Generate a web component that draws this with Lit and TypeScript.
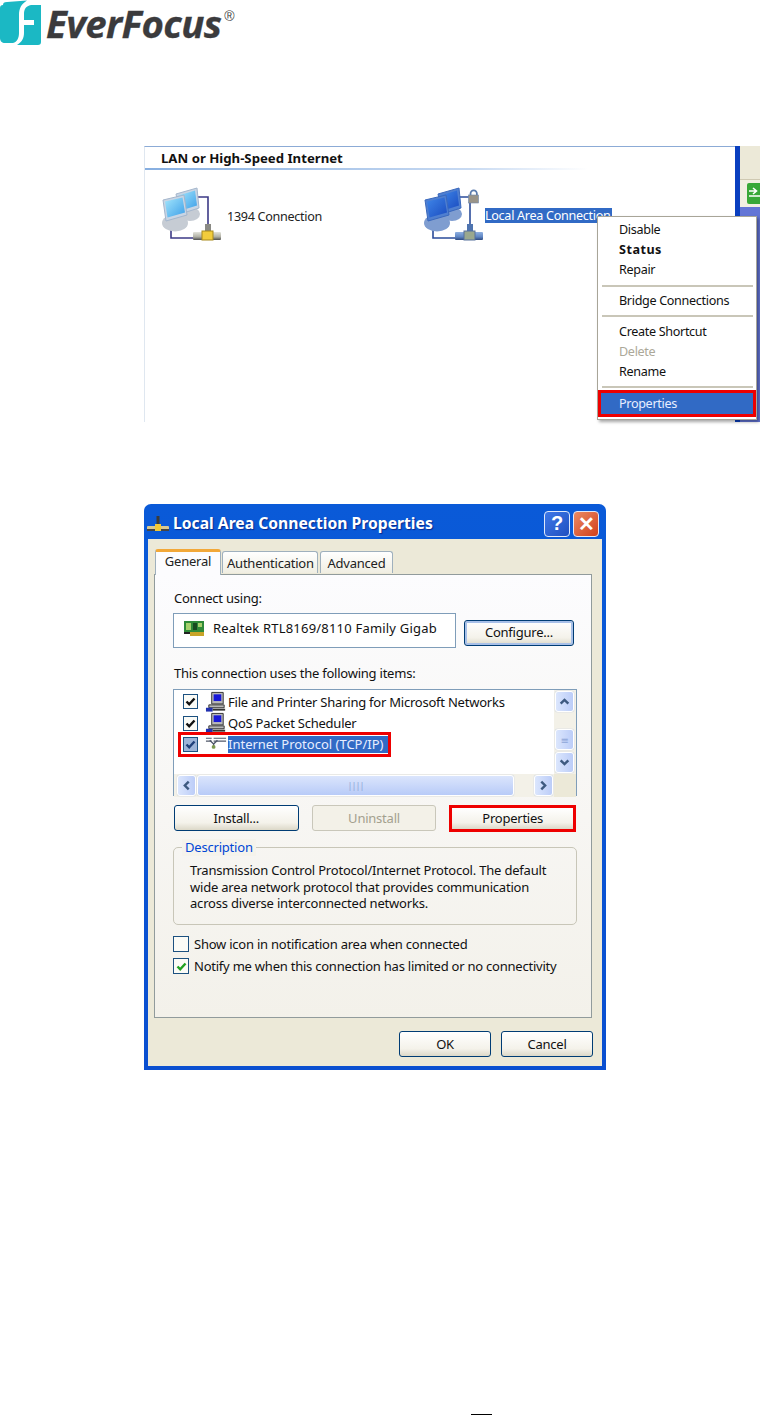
import { LitElement, html, css, svg } from "lit";
import { customElement } from "lit/decorators.js";

const netIcon = (dark: boolean, lock: boolean) => {
  const wire = dark ? "#2b4c9a" : "#3c3a86";
  const frame = dark ? "#4f7fd0" : "#c9d5e4";
  const edge = dark ? "#3a68bc" : "#a4b6cc";
  const scr = dark ? "url(#scrD)" : "url(#scrL)";
  const base = dark ? "#7f9dd0" : "#c6ccd4";
  const bar = dark ? "url(#barD)" : "url(#barL)";
  return html`<svg class="neticon" width="60" height="62" viewBox="0 0 60 62">
  <defs>
    <linearGradient id="scrL" x1="0" y1="0" x2="1" y2="1"><stop offset="0" stop-color="#a4e6fc"/><stop offset="1" stop-color="#3d9fe8"/></linearGradient>
    <linearGradient id="scrD" x1="0" y1="0" x2="1" y2="1"><stop offset="0" stop-color="#3f86e8"/><stop offset="1" stop-color="#1b4cc0"/></linearGradient>
    <linearGradient id="barL" x1="0" y1="0" x2="0" y2="1"><stop offset="0" stop-color="#e4e4dc"/><stop offset=".6" stop-color="#b0b0a4"/><stop offset="1" stop-color="#4e4e4e"/></linearGradient>
    <linearGradient id="barD" x1="0" y1="0" x2="0" y2="1"><stop offset="0" stop-color="#8fb0e0"/><stop offset=".6" stop-color="#5f86c4"/><stop offset="1" stop-color="#2e4a80"/></linearGradient>
  </defs>
  <path d="M36 11H47V46" fill="none" stroke="${wire}" stroke-width="1.6"/>
  <path d="M10 40V52H33" fill="none" stroke="${wire}" stroke-width="1.6"/>
  <ellipse cx="29" cy="28" rx="10" ry="7" fill="${base}"/>
  <path d="M15 8L36 2L38 22L19 28Z" fill="${frame}" stroke="${edge}"/>
  <path d="M17.5 9.5L34 4.5L36 19.5L20 24.5Z" fill="${scr}"/>
  <ellipse cx="14" cy="37" rx="13" ry="8.5" fill="${base}"/>
  <path d="M2 14L23 9L26 29L5 35Z" fill="${frame}" stroke="${edge}"/>
  <path d="M4 15.5L21.5 11.5L24 26.5L6.5 31.5Z" fill="${scr}"/>
  <rect x="44" y="38" width="6" height="9" fill="${dark ? "#4f74b0" : "#8a8a84"}"/>
  <rect x="32" y="46" width="28" height="8" rx="1" fill="${bar}"/>
  <rect x="41" y="45" width="11" height="9" fill="${dark ? "#9aa88e" : "#f2cc3c"}" stroke="${dark ? "#56709c" : "#a88a1c"}"/>
  ${lock ? svg`<path d="M47.5 8a3.2 3.6 0 0 1 6.4 0v3h-6.4z" fill="none" stroke="#5b7cae" stroke-width="1.8"/><rect x="45.5" y="9" width="10" height="8" fill="#9a9488" stroke="#6f88ac" stroke-width=".6"/>` : ""}
</svg>`;
};

const pcIcon = html`<svg class="mini" width="24" height="22" viewBox="0 0 24 22">
  <path d="M7 1H19V13H7Z" fill="#b8b8b8" stroke="#333"/>
  <rect x="9" y="3" width="8" height="7" fill="#1818d8"/>
  <path d="M4 14H20V17H4Z" fill="#b8b8b8" stroke="#333"/>
  <path d="M1 17H8V21H1Z" fill="#2030b0"/>
  <path d="M8 18H21V20H8Z" fill="#333"/>
</svg>`;

const tcpIcon = html`<svg class="mini" width="24" height="20" viewBox="0 0 24 20">
  <rect x="7" y="6" width="17" height="14" fill="#fff"/>
  <path d="M1 6H7M1 3H7M9 3H22M9 6H22" stroke="#50586a" stroke-width="1.2" fill="none"/>
  <path d="M5 5L9 9V13M13 5L9 9" stroke="#50586a" stroke-width="1.4" fill="none"/>
  <circle cx="9" cy="12" r="2" fill="#7c9a50"/>
</svg>`;

const nicIcon = html`<svg class="mini" width="22" height="18" viewBox="0 0 22 18">
  <rect x="0" y="2" width="20" height="11" fill="#2e8a38"/>
  <rect x="2" y="4" width="5" height="7" fill="#a6d06c"/>
  <rect x="9" y="4" width="4" height="7" fill="#184a20"/>
  <rect x="14" y="4" width="4" height="4" fill="#a6d06c"/>
  <rect x="6" y="13" width="14" height="4" fill="#c8a428"/>
  <rect x="0" y="13" width="6" height="2" fill="#222"/>
</svg>`;

const titleIcon = html`<svg class="mini" width="22" height="18" viewBox="0 0 22 18">
  <path d="M11 1V10" stroke="#3a3a3a" stroke-width="3"/>
  <rect x="0" y="11" width="22" height="4" rx="1" fill="#d8c890"/>
  <rect x="0" y="14" width="22" height="2" fill="#444"/>
  <rect x="8" y="9" width="6" height="7" fill="#f0c838"/>
</svg>`;

const check = (color: string) => html`<svg viewBox="0 0 11 11" width="11" height="11"><path d="M1.5 5.5L4.2 8.3L9.5 2.5" fill="none" stroke="${color}" stroke-width="2.4"/></svg>`;

const arrow = (d: string) => html`<svg viewBox="0 0 10 10" width="11" height="11"><path d="${d}" fill="none" stroke="#3e5a80" stroke-width="2.2"/></svg>`;

@customElement("app-root")
export class AppRoot extends LitElement {
  static styles = css`
    :host { display: block; width: 760px; height: 1415px; background: #fff; overflow: hidden; font-family: "Noto Sans", "DejaVu Sans", sans-serif; color: #111; font-size: 13px; letter-spacing: -0.23px; position: relative; }
    * { box-sizing: border-box; }
    .mini { filter: blur(.3px); }
    .neticon { filter: blur(.45px); flex: none; }

    .logo { display: flex; height: 146px; align-items: flex-start; letter-spacing: normal; }
    .logo svg { display: block; filter: blur(.3px); flex: none; }
    .brand { font-family: "Open Sans", "Noto Sans", sans-serif; font-weight: 700; font-style: italic; font-size: 38.4px; line-height: 54px; color: #3b3b3d; margin: -4px 0 0 0; padding: 0 4px; letter-spacing: -0.6px; -webkit-text-stroke: .3px #3b3b3d; white-space: nowrap; }
    .reg { font-family: "Liberation Sans", sans-serif; font-size: 14px; line-height: 14px; color: #444; margin: 9px 0 0 -1px; }

    /* first screenshot */
    .shot1 { margin-left: 144px; width: 616px; height: 276px; display: flex; position: relative; }
    .folder { width: 591px; flex: none; border-left: 1px solid #dfe7f0; border-top: 1px solid #8cabd6; background: #fff; }
    .groupHead { height: 23px; font-weight: 700; font-size: 13.2px; letter-spacing: normal; line-height: 23px; padding-left: 16px; color: #111; border-bottom: 2px solid; border-image: linear-gradient(90deg, #86aee0, #c8daf2 55%, #fff 75%) 1; }
    .conns { display: flex; padding: 16px 0 0 16px; }
    .conn { display: flex; align-items: center; height: 62px; color: #222; font-size: 12.6px; letter-spacing: -0.3px; }
    .conn.a { width: 262px; }
    .conn.a .label { margin: 0 0 0 6px; transform: translateY(-1px); }
    .conn.b .label { background: #316ac5; color: #fff; line-height: 15px; height: 15px; width: 127px; white-space: nowrap; margin-left: 2px; transform: translateY(-2px); }
    .edge { width: 5px; flex: none; background: #0a3fc0; }
    .side { flex: 1; min-width: 0; display: flex; flex-direction: column; }
    .sideTop { height: 34px; background: #ece9d8; border-bottom: 1px solid #cfc9b2; }
    .sideMid { height: 27px; background: #f1efe2; padding: 3px 0 0 7px; overflow: hidden; }
    .green { width: 20px; height: 21px; background: #38a838; border-radius: 2px; display: block; }
    .sideLow { flex: 1; background: #6375d6; }

    .menu { position: absolute; left: 453px; top: 70px; width: 160px; height: 204px; background: #fff; border: 1px solid #a8a598; box-shadow: 2px 2px 3px rgba(0,0,0,.35); padding: 3px 1px 0; font-size: 12.6px; letter-spacing: -0.33px; color: #111; }
    .mi { height: 20px; line-height: 20px; padding-left: 20px; white-space: nowrap; }
    .mi.bold { font-weight: 700; letter-spacing: .5px; }
    .mi.dis { color: #aca899; }
    .sep { height: 2px; margin: 4px 2px 4px 3px; background: #c9c6b8; }
    .sep.s1 { margin-top: 5px; }
    .sep.s2 { margin-bottom: 5px; }
    .sep.s3 { margin: 4px 2px 2px 3px; }
    .mi.sel { height: 27px; line-height: 21px; background: #316ac5; color: #e8eeff; border: 3px solid #ee0000; margin: 0 -1px; padding-left: 18px; }

    /* dialog */
    .dialogWrap { margin: 82px 0 0 144px; width: 462px; height: 566px; }
    .dialog { width: 100%; height: 100%; background: linear-gradient(#0a5ad8, #0a4fd0); border-radius: 7px 7px 0 0; padding: 0 4px 4px; display: flex; flex-direction: column; }
    .title { height: 31px; flex: none; margin-top: 4px; padding-right: 3px; display: flex; align-items: center; color: #fff; font-weight: 700; font-size: 15.7px; letter-spacing: normal; text-shadow: 1px 1px 1px #0a2a90; }
    .title svg { margin-right: 4px; flex: none; margin-left: -1px; }
    .title span { flex: 1; white-space: nowrap; min-width: 0; line-height: 20px; padding-bottom: 2px; }
    .tb { width: 26px; height: 26px; flex: none; border: 1px solid #dfe8fa; border-radius: 4px; margin-left: 3px; display: flex; align-items: center; justify-content: center; font-size: 20px; font-weight: 700; color: #fff; text-shadow: none; font-family: "Liberation Sans", sans-serif; }
    .tb.help { background: linear-gradient(135deg, #3d78e8, #2150c0); }
    .tb.close { background: linear-gradient(135deg, #ea8a64, #d2401a); }
    .client { flex: 1; background: #ece9d8; padding: 10px 10px 0 6px; display: flex; flex-direction: column; }
    .tabs { display: flex; align-items: flex-end; height: 25px; padding-left: 1px; position: relative; z-index: 1; }
    .tab { height: 22px; line-height: 22px; background: linear-gradient(#fff, #f0eee2); border: 1px solid #9fb0bd; border-bottom: none; border-radius: 3px 3px 0 0; padding: 0 4px; text-align: center; margin-bottom: 1px; white-space: nowrap; color: #222; }
    .tab.on { height: 26px; width: 66px; background: #fcfcfe; border-top: 3px solid #f2a838; margin-bottom: -1px; line-height: 18px; }
    .tab.auth { width: 96px; margin-left: 1px; }
    .tab.adv { width: 73px; margin-left: 2px; }
    .panel { height: 444px; width: 438px; background: linear-gradient(#fcfcfe, #f3f1ea); border: 1px solid #919b9c; padding: 14px 15px 0 19px; }
    .lbl { line-height: 18px; height: 18px; white-space: nowrap; }
    .connBar { display: flex; margin: 6px 0 0 -1px; }
    .adapter { width: 283px; height: 35px; background: #fff; border: 1px solid #7f9db9; display: flex; align-items: center; padding: 0 0 6px 10px; white-space: nowrap; letter-spacing: .2px; }
    .adapter svg { margin-right: 7px; flex: none; }
    .btn { height: 26px; background: linear-gradient(#fff, #f4f2ea 70%, #dcd8c8); border: 1px solid #003c74; border-radius: 3px; display: flex; align-items: center; justify-content: center; white-space: nowrap; color: #111; }
    .btn.def { box-shadow: inset 0 0 0 2px #a8c0e8; }
    .btn.config { width: 110px; margin: 7px 0 0 8px; padding-bottom: 2px; }
    .items { margin: 16px 0 0 0; }
    .list { width: 404px; height: 107px; margin: 7px 0 0 -1px; border: 1px solid #7f9db9; background: #fff; display: grid; grid-template-columns: 1fr 22px; grid-template-rows: 1fr 23px; }
    .rows { padding: 1px 0 0 9px; position: relative; }
    .row { height: 21.5px; display: flex; align-items: center; white-space: nowrap; color: #111; }
    .cb { width: 15px; height: 15px; border: 1px solid #1c5180; background: #fbfbf6; display: flex; align-items: center; justify-content: center; flex: none; }
    .row .ico { width: 23px; margin-left: 7px; display: flex; flex: none; }
    .row.sel .cb { background: #9db4d8; }
    .row.sel .txt { background: #316ac5; color: #e8eeff; line-height: 16px; height: 17px; min-width: 161px; letter-spacing: 0; }
    .redrow { position: absolute; left: 4px; top: 42px; width: 213px; height: 25px; border: 3px solid #ee0000; pointer-events: none; }
    .vbar { background: #f3f1e8; display: flex; flex-direction: column; padding: 1px; }
    .sb { width: 19px; height: 21px; background: linear-gradient(90deg, #dbe6fd, #bccdf8); border: 1px solid #fff; border-radius: 3px; box-shadow: 0 0 1px #8ea6d8; display: flex; align-items: center; justify-content: center; flex: none; }
    .thumbv { margin: 17px 0 2px; color: #8ea6d8; font-size: 10px; }
    .hbar { background: #f3f1e8; display: flex; align-items: center; padding: 0 1px 0 3px; }
    .thumbh { flex: 1; height: 21px; margin: 0 20px 0 1px; background: linear-gradient(#dbe5fc, #b8cbf8); border: 1px solid #fff; border-radius: 3px; box-shadow: 0 0 1px #8ea6d8; text-align: center; font-size: 9px; line-height: 19px; color: #8ea6d8; letter-spacing: -1px; }
    .corner { background: #ece9d8; }
    .actions { display: flex; margin: 9px 0 0 0; }
    .btn.act { width: 125px; }
    .btn.dis { color: #a3a08e; border-color: #c9c7ba; background: #f3f1e8; margin-left: 13px; }
    .btn.red { width: 127px; margin-left: 13px; height: 27px; border: 3px solid #ee0000; border-radius: 0; padding-bottom: 1px; }
    .group { position: relative; width: 404px; height: 78px; margin: 15px 0 0 -1px; border: 1px solid #c8c6b8; border-radius: 5px; padding: 14px 8px 0 16px; line-height: 16.5px; color: #111; letter-spacing: -0.2px; }
    .legend { position: absolute; left: 8px; top: -9px; padding: 0 3px; line-height: 17px; background: #f5f3ec; color: #0046d5; }
    .chk { display: flex; align-items: center; height: 22px; white-space: nowrap; }
    .chk .cb { width: 16px; height: 16px; margin-right: 5px; margin-left: -1px; }
    .chk.first { margin-top: 8px; }
    .footBtns { display: flex; justify-content: flex-end; margin: 13px -1px 0 0; gap: 10px; }
    .btn.foot { width: 92px; }

    .pageMark { position: absolute; left: 471px; top: 1414px; width: 21px; height: 1px; background: #000; }
  `;

  render() {
    return html`
      <div class="logo">
        <svg width="42" height="46" viewBox="0 0 42 46">
          <path d="M3 5C3 3 4 2 7 2L27 .5C21 4 19 9 19 15V33C19 38 17 42 13 43H5C2 43 0 41 0 38V8C0 6 1 5 3 5Z" fill="#1bb8c4"/>
          <path d="M31 5H41V42C41 44 40 45 38 45H17C22 42 24 38 24 33V25H34V20H24V14C24 9 26 6 31 5Z" fill="#1bb8c4"/>
        </svg>
        <div class="brand">EverFocus</div>
        <div class="reg">®</div>
      </div>

      <div class="shot1">
        <div class="folder">
          <div class="groupHead">LAN or High-Speed Internet</div>
          <div class="conns">
            <div class="conn a">${netIcon(false, false)}<span class="label">1394 Connection</span></div>
            <div class="conn b">${netIcon(true, true)}<span class="label">Local Area Connection</span></div>
          </div>
        </div>
        <div class="edge"></div>
        <div class="side">
          <div class="sideTop"></div>
          <div class="sideMid">
            <span class="green">
              <svg width="20" height="21" viewBox="0 0 20 21"><path d="M2 8H9M6 5L9.5 8L6 11M2 13H20" fill="none" stroke="#fff" stroke-width="1.6"/></svg>
            </span>
          </div>
          <div class="sideLow"></div>
        </div>
        <div class="menu">
          <div class="mi">Disable</div>
          <div class="mi bold">Status</div>
          <div class="mi">Repair</div>
          <div class="sep s1"></div>
          <div class="mi">Bridge Connections</div>
          <div class="sep s2"></div>
          <div class="mi">Create Shortcut</div>
          <div class="mi dis">Delete</div>
          <div class="mi">Rename</div>
          <div class="sep s3"></div>
          <div class="mi sel">Properties</div>
        </div>
      </div>

      <div class="dialogWrap">
        <div class="dialog">
          <div class="title">${titleIcon}<span>Local Area Connection Properties</span><div class="tb help">?</div><div class="tb close">✕</div></div>
          <div class="client">
            <div class="tabs">
              <div class="tab on">General</div>
              <div class="tab auth">Authentication</div>
              <div class="tab adv">Advanced</div>
            </div>
            <div class="panel">
              <div class="lbl">Connect using:</div>
              <div class="connBar">
                <div class="adapter">${nicIcon}<span>Realtek RTL8169/8110 Family Gigab</span></div>
                <div class="btn def config">Configure...</div>
              </div>
              <div class="lbl items">This connection uses the following items:</div>
              <div class="list">
                <div class="rows">
                  <div class="row"><span class="cb">${check("#111")}</span><span class="ico">${pcIcon}</span><span class="txt">File and Printer Sharing for Microsoft Networks</span></div>
                  <div class="row"><span class="cb">${check("#111")}</span><span class="ico">${pcIcon}</span><span class="txt">QoS Packet Scheduler</span></div>
                  <div class="row sel"><span class="cb">${check("#20407a")}</span><span class="ico">${tcpIcon}</span><span class="txt">Internet Protocol (TCP/IP)</span></div>
                  <div class="redrow"></div>
                </div>
                <div class="vbar">
                  <div class="sb">${arrow("M1.5 7L5 3.5L8.5 7")}</div>
                  <div class="sb thumbv">≡</div>
                  <div class="sb">${arrow("M1.5 3L5 6.5L8.5 3")}</div>
                </div>
                <div class="hbar">
                  <div class="sb">${arrow("M7 1.5L3.5 5L7 8.5")}</div>
                  <div class="thumbh">||||</div>
                  <div class="sb">${arrow("M3 1.5L6.5 5L3 8.5")}</div>
                </div>
                <div class="corner"></div>
              </div>
              <div class="actions">
                <div class="btn act">Install...</div>
                <div class="btn act dis">Uninstall</div>
                <div class="btn red">Properties</div>
              </div>
              <div class="group">
                <div class="legend">Description</div>
                Transmission Control Protocol/Internet Protocol. The default<br>wide area network protocol that provides communication<br>across diverse interconnected networks.
              </div>
              <div class="chk first"><span class="cb"></span>Show icon in notification area when connected</div>
              <div class="chk"><span class="cb">${check("#21a121")}</span>Notify me when this connection has limited or no connectivity</div>
            </div>
            <div class="footBtns">
              <div class="btn foot">OK</div>
              <div class="btn foot">Cancel</div>
            </div>
          </div>
        </div>
      </div>
      <div class="pageMark"></div>
    `;
  }
}
